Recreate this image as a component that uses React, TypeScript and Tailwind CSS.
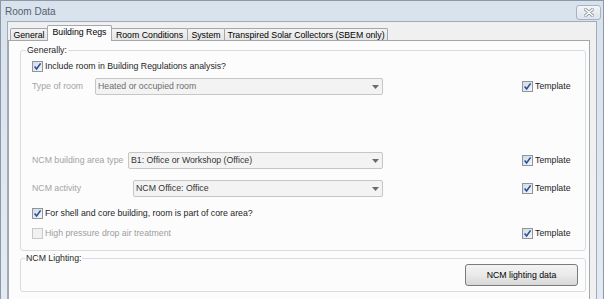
import React from 'react';

const font = "font-['Liberation_Sans',Arial,sans-serif]";

const Check = ({ checked = true, disabled = false }: { checked?: boolean; disabled?: boolean }) => (
    <span
        className={`flex h-[11px] w-[11px] shrink-0 items-center justify-center border ${
            disabled
                ? 'border-[#c8c8c8] bg-[#f1f1f1]'
                : 'border-[#8f959c] bg-linear-to-br from-[#d3dae3] to-[#f4f6f9]'
        }`}
    >
        {checked && (
            <svg width="9" height="9" viewBox="0 0 9 9">
                <path d="M1.6 4.6 L3.6 7 L7.6 1.4" fill="none" stroke="#2b4e97" strokeWidth="1.6" />
            </svg>
        )}
    </span>
);

const Template = () => (
    <div className="ml-auto flex w-[63px] items-center gap-[2px]">
        <Check />
        <span className="text-[#1e1e1e]">Template</span>
    </div>
);

const Combo = ({ value, width, muted = false }: { value: string; width: string; muted?: boolean }) => (
    <div
        className={`flex h-[17px] ${width} items-center justify-between rounded-[2px] border border-[#c6c6c6] bg-[#f3f3f3] pl-[2px] pr-[3px] ${
            muted ? 'text-[#6e6e6e]' : 'text-[#333]'
        }`}
    >
        <span>{value}</span>
        <svg width="7" height="4" viewBox="0 0 7 4">
            <path d="M0 0 H7 L3.5 4 Z" fill="#6b6b6b" />
        </svg>
    </div>
);

const Tab = ({ label, width, active = false }: { label: string; width: string; active?: boolean }) => (
    <div
        className={`flex ${width} items-center justify-center whitespace-nowrap rounded-t-[2px] border-x border-t border-[#a3a7ae] ${
            active
                ? 'relative z-10 h-[16px] bg-[#fcfcfc] pb-[2px]'
                : 'h-[13px] bg-linear-to-b from-[#f3f3f3] to-[#e4e4e4]'
        } -ml-px first:ml-0 text-black`}
    >
        {label}
    </div>
);

export default function App() {
    return (
        <div className={`${font} flex h-[299px] w-[604px] flex-col overflow-hidden border-x border-t border-[#8d98a6] bg-linear-to-b from-[#d8e2ed] to-[#e3eaf3] text-[8.75px] leading-[11px]`}>
            {/* title bar */}
            <div className="flex h-[20px] shrink-0 items-center justify-between pl-[4px] pr-[2px]">
                <span className="text-[10px] text-[#56606d]">Room Data</span>
                <div className="mt-[2px] flex h-[15px] w-[25px] items-center justify-center rounded-[3px] border border-[#a9b3bf] bg-linear-to-b from-[#f2f5f9] to-[#dde4ec]">
                    <svg width="10" height="9" viewBox="0 0 10 9">
                        <path
                            d="M1 1 L9 8 M9 1 L1 8"
                            stroke="#8d949c"
                            strokeWidth="3"
                            strokeLinecap="round"
                        />
                        <path
                            d="M1 1 L9 8 M9 1 L1 8"
                            stroke="#ffffff"
                            strokeWidth="1.4"
                            strokeLinecap="round"
                        />
                    </svg>
                </div>
            </div>

            {/* client area */}
            <div className="mx-[6px] flex flex-1 flex-col border border-[#a2acb8] bg-[#f0f0f0]">
                <div className="flex h-[19px] shrink-0 items-end pl-[2px]">
                    <Tab label="General" width="w-[38px]" />
                    <Tab label="Building Regs" width="w-[65px]" active />
                    <Tab label="Room Conditions" width="w-[77px]" />
                    <Tab label="System" width="w-[38px]" />
                    <Tab label="Transpired Solar Collectors (SBEM only)" width="w-[164px]" />
                </div>

                <div className="-mt-px mr-[6px] flex-1 border border-[#a3a7ae] bg-[#fcfcfc] pb-[20px] pl-[11px] pr-[3px] pt-[9px]">
                    {/* Generally group */}
                    <div className="relative rounded-[3px] border border-[#d7dce1] pb-[10px] pl-[11px] pt-[9px]">
                        <span className="absolute -top-[7px] left-[5px] bg-[#fcfcfc] px-[1px] leading-[12px] text-[#1e1e1e]">
                            Generally:
                        </span>

                        <div className="flex h-[13px] items-center gap-[2px] text-[#1e1e1e]">
                            <Check />
                            <span>Include room in Building Regulations analysis?</span>
                        </div>

                        <div className="mt-[5px] flex h-[17px] items-center">
                            <span className="w-[63px] text-[#a3a3a3]">Type of room</span>
                            <Combo value="Heated or occupied room" width="w-[288px]" muted />
                            <Template />
                        </div>

                        <div className="mt-[57px] flex h-[17px] items-center">
                            <span className="w-[96px] text-[#a3a3a3]">NCM building area type</span>
                            <Combo value="B1: Office or Workshop (Office)" width="w-[255px]" />
                            <Template />
                        </div>

                        <div className="mt-[11px] flex h-[17px] items-center">
                            <span className="w-[101px] text-[#a3a3a3]">NCM activity</span>
                            <Combo value="NCM Office: Office" width="w-[250px]" />
                            <Template />
                        </div>

                        <div className="mt-[10px] flex h-[13px] items-center gap-[2px] text-[#1e1e1e]">
                            <Check />
                            <span>For shell and core building, room is part of core area?</span>
                        </div>

                        <div className="mt-[7px] flex h-[13px] items-center">
                            <div className="flex items-center gap-[2px] text-[#9d9d9d]">
                                <Check checked={false} disabled />
                                <span>High pressure drop air treatment</span>
                            </div>
                            <Template />
                        </div>
                    </div>

                    {/* NCM Lighting group */}
                    <div className="relative mt-[7px] flex justify-end rounded-[3px] border border-[#d7dce1] pb-[5px] pr-[7px] pt-[5px]">
                        <span className="absolute -top-[7px] left-[4px] bg-[#fcfcfc] px-[1px] leading-[12px] text-[#1e1e1e]">
                            NCM Lighting:
                        </span>
                        <button className="flex h-[22px] w-[113px] items-center justify-center rounded-[3px] border border-[#7a7a7a] bg-linear-to-b from-[#f3f3f3] via-[#eaeaea] to-[#d7d7d7] text-black">
                            NCM lighting data
                        </button>
                    </div>
                </div>
            </div>
        </div>
    );
}
